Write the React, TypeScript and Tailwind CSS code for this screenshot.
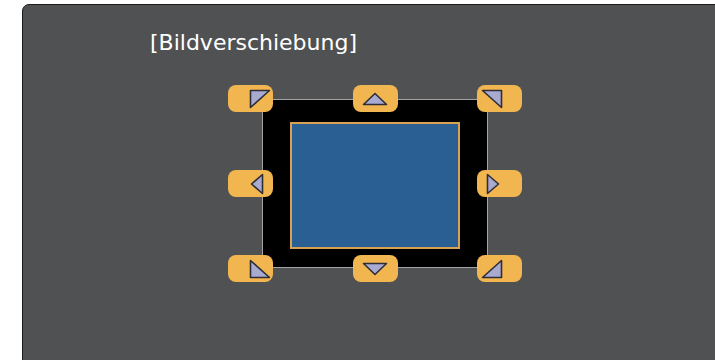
import React from "react";

type Dir = "tl" | "t" | "tr" | "l" | "r" | "bl" | "b" | "br";

const shapes: Record<Dir, { w: number; h: number; pts: string }> = {
  tl: { w: 22, h: 20, pts: "1.5,1.5 20.5,1.5 1.5,18.5" },
  tr: { w: 22, h: 20, pts: "1.5,1.5 20.5,1.5 20.5,18.5" },
  bl: { w: 22, h: 20, pts: "1.5,1.5 1.5,18.5 20.5,18.5" },
  br: { w: 22, h: 20, pts: "20.5,1.5 20.5,18.5 1.5,18.5" },
  t: { w: 26, h: 14, pts: "1.5,12.5 13,1.5 24.5,12.5" },
  b: { w: 26, h: 14, pts: "1.5,1.5 24.5,1.5 13,12.5" },
  l: { w: 14, h: 22, pts: "12.5,1.5 12.5,20.5 1.5,11" },
  r: { w: 14, h: 22, pts: "1.5,1.5 1.5,20.5 12.5,11" },
};

function Arrow({ dir }: { dir: Dir }) {
  const s = shapes[dir];
  return (
    <svg width={s.w} height={s.h} viewBox={`0 0 ${s.w} ${s.h}`}>
      <polygon points={s.pts} fill="#a9aad0" stroke="#2e2e36" strokeWidth="1.6" strokeLinejoin="round" />
    </svg>
  );
}

// placement of the triangle inside each button (towards the frame)
const pad: Record<Dir, string> = {
  tl: "justify-start pl-[21px]",
  l: "justify-start pl-[22px]",
  bl: "justify-start pl-[21px]",
  t: "justify-center",
  b: "justify-center",
  tr: "justify-start pl-[4px]",
  r: "justify-start pl-[9px]",
  br: "justify-start pl-[4px]",
};

function ShiftButton({ dir }: { dir: Dir }) {
  return (
    <div className={`flex h-[27px] w-[45px] items-center rounded-[8px] bg-[#f2b651] ${pad[dir]}`}>
      <Arrow dir={dir} />
    </div>
  );
}

export default function App() {
  const order: (Dir | null)[] = ["tl", "t", "tr", "l", null, "r", "bl", "b", "br"];

  return (
    <div className="h-[360px] w-[715px] overflow-hidden bg-white">
      <div className="ml-[22px] mt-[4px] h-[362px] w-[710px] rounded-[7px] border border-[#1c1c1c] bg-[#505153]">
        <h1 className="ml-[127px] mt-[27px] font-['DejaVu_Sans',sans-serif] text-[22px] leading-none text-white">
          [Bildverschiebung]
        </h1>

        {/* shift diagram */}
        <div className="relative ml-[205px] mt-[31px] h-[197px] w-[294px]">
          <div className="absolute inset-x-[34px] inset-y-[14px] border border-[#a4a4a4] bg-black px-[27px] pb-[18px] pt-[22px]">
            <div className="h-full w-full border-2 border-[#d8a253] bg-[#2a5f94]" />
          </div>
          <div className="relative grid h-full grid-cols-[45px_45px_45px] grid-rows-[27px_27px_27px] content-between justify-between">
            {order.map((d, i) => (d ? <ShiftButton key={i} dir={d} /> : <div key={i} />))}
          </div>
        </div>
      </div>
    </div>
  );
}
